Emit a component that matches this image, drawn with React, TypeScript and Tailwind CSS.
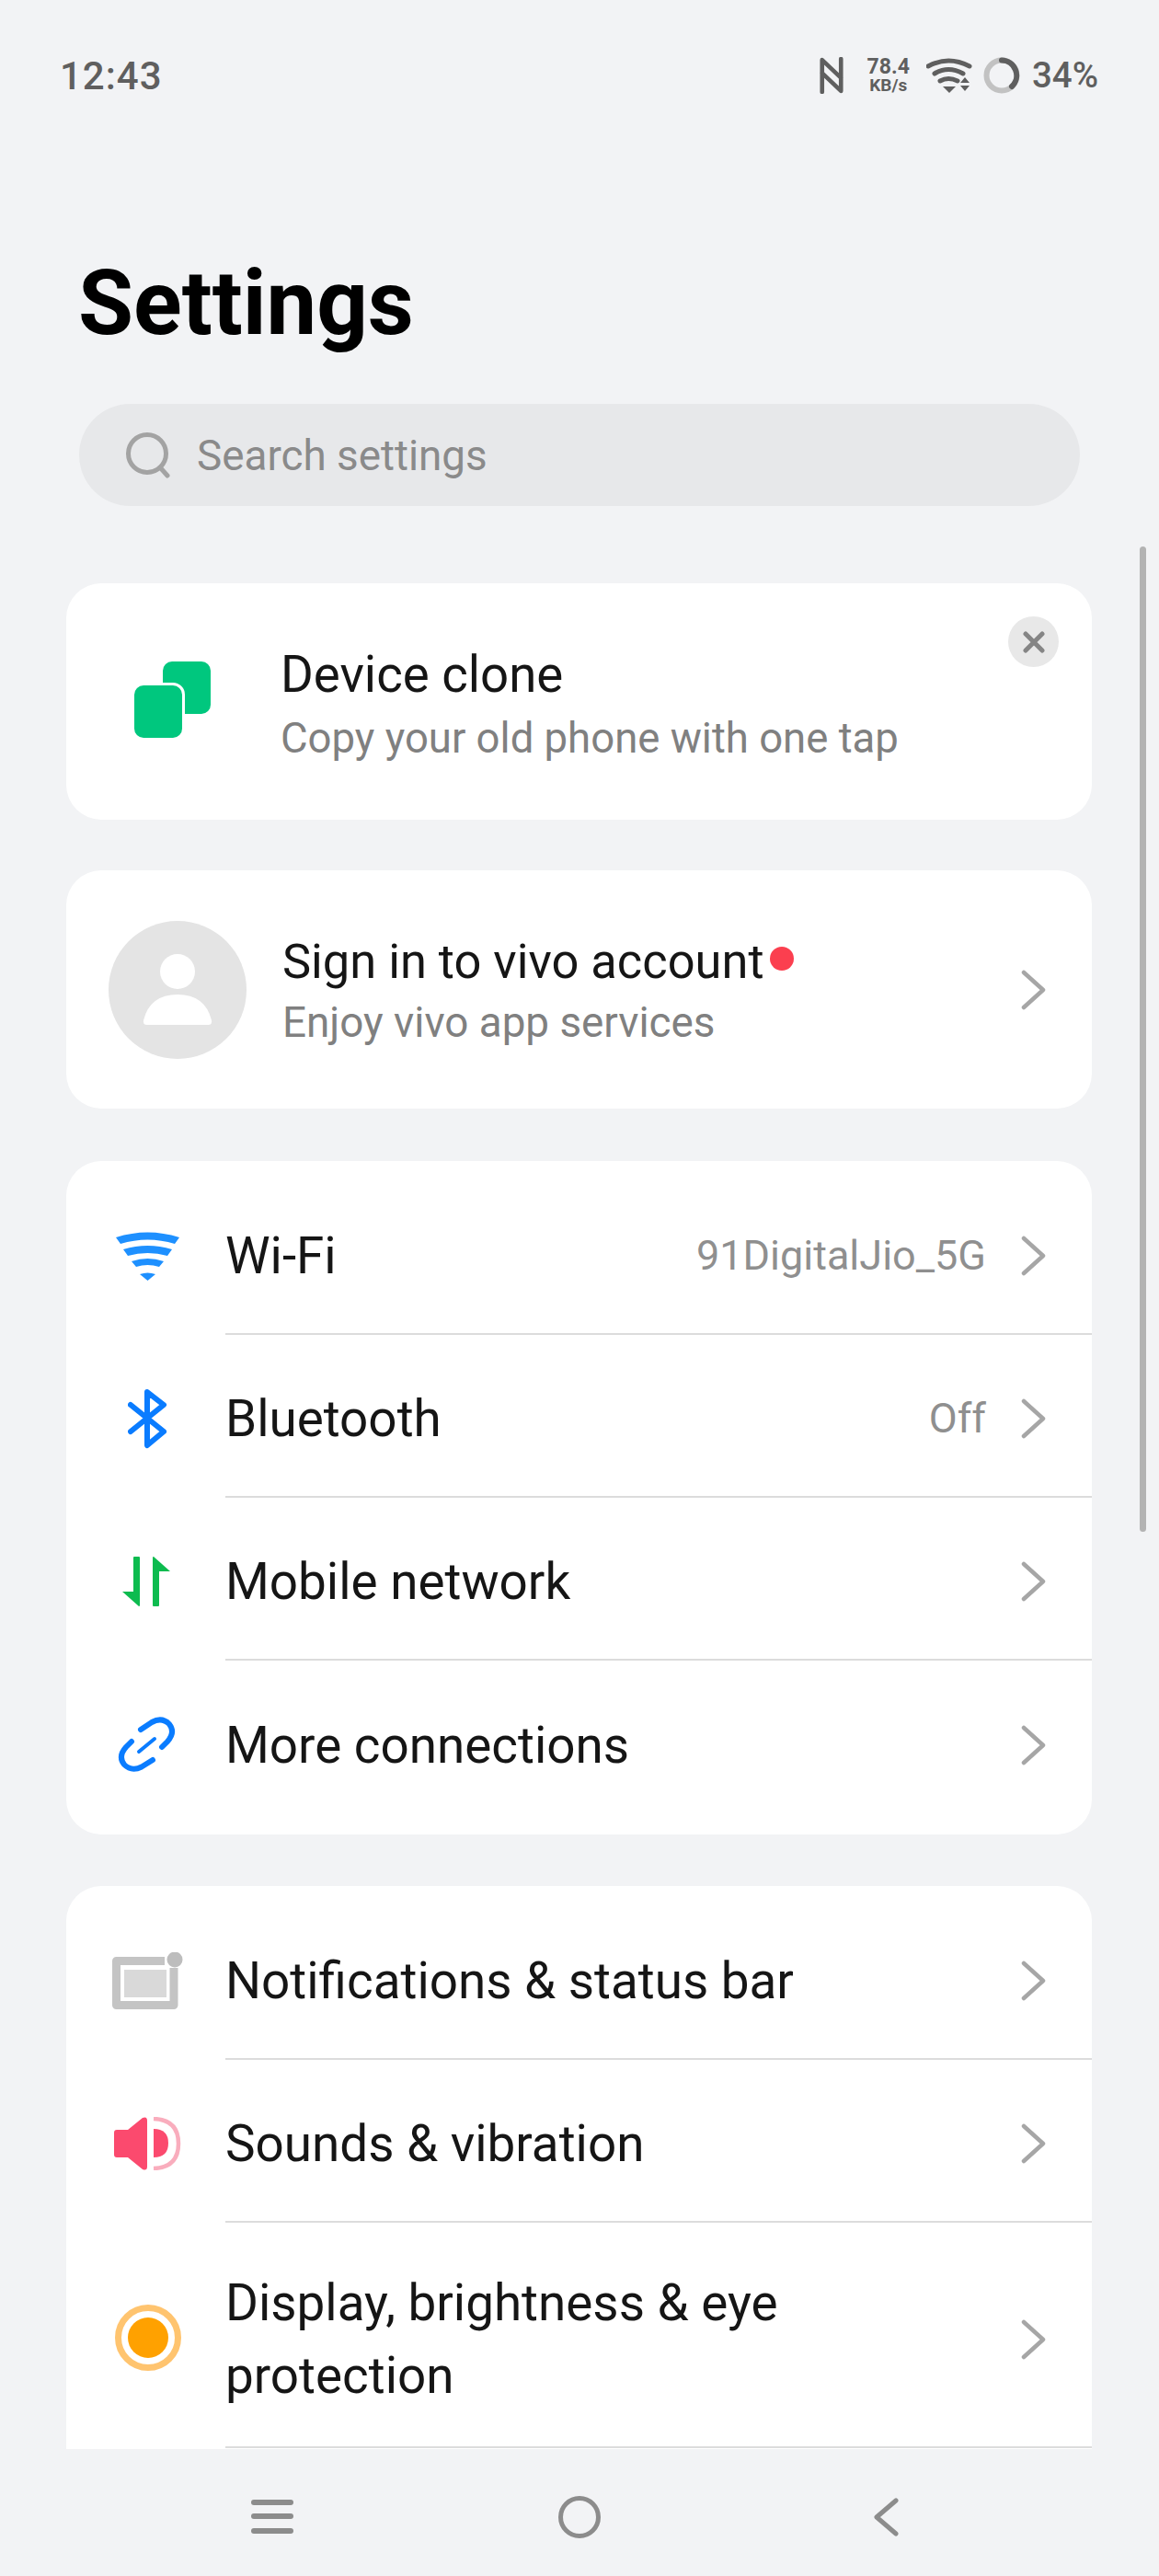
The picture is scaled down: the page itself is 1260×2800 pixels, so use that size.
const Chevron = () => (
  <svg width="27" height="44" viewBox="0 0 27 44" fill="none" className="shrink-0">
    <path d="M3 3 L24 22 L3 41" stroke="#a6a6a6" strokeWidth="4.5" strokeLinecap="round" strokeLinejoin="round" />
  </svg>
);

const WifiIcon = () => (
  <svg width="69" height="53" viewBox="0 0 69 53" fill="#1e90ff">
    <path d="M0 6 Q34.5 -5 69 6 L64 13 Q34.5 4 5 13Z" />
    <path d="M8 19 Q34.5 11 61 19 L56 26 Q34.5 20 13 26Z" />
    <path d="M17 32 Q34.5 26 52 32 L47 38 Q34.5 34 22 38Z" />
    <path d="M26 46 Q34.5 43 43 46 L34.5 53Z" />
  </svg>
);

const BluetoothIcon = () => (
  <svg width="43" height="66" viewBox="0 0 43 66" fill="none" stroke="#0a7cff" strokeWidth="6" strokeLinecap="round" strokeLinejoin="round">
    <path d="M3 18 L39 47 L21 62 V4 L39 18 L3 47" />
  </svg>
);

const MobileIcon = () => (
  <svg width="52" height="54" viewBox="0 0 52 54" fill="#0dbb4f" className="ml-[-3px]">
    <path d="M12 1 Q12 0 13 0 H18 Q19 0 19 1 V53 Q19 54 18 54 L0 38 H12Z" />
    <path d="M33 1 Q33 0 34 0 L52 16 H40 V53 Q40 54 39 54 H34 Q33 54 33 53Z" />
  </svg>
);

const LinkIcon = () => (
  <svg width="63" height="62" viewBox="0 0 63 62" fill="none" stroke="#0a7cff" strokeLinecap="round" className="ml-[-2px]">
    <path d="M25 15 L37 7 Q48 1 56 9 Q63 18 54 28 L48 34" strokeWidth="6" />
    <path d="M38 48 L26 55.5 Q15 61 7 53 Q0 44 9 34 L15 28" strokeWidth="6" />
    <path d="M23 39 L40 25" strokeWidth="4" />
  </svg>
);

const NotificationIcon = () => (
  <svg width="77" height="62" viewBox="0 0 77 62" fill="none">
    <path d="M57 9.5 H4.5 V57.5 H67 V17" stroke="#c4c4c4" strokeWidth="9" strokeLinejoin="round" />
    <rect x="13" y="19" width="46" height="30" fill="#d9d9d9" />
    <circle cx="68" cy="8" r="8.5" fill="#bdbdbd" />
  </svg>
);

const SoundIcon = () => (
  <svg width="73" height="58" viewBox="0 0 73 58">
    <path d="M3 14 H15 L31 1 Q36 -1 36 4 V54 Q36 59 31 57 L15 44 H3 Q0 44 0 41 V17 Q0 14 3 14Z" fill="#fb4a6e" />
    <path d="M43 13 Q59 13 59 28.5 Q59 44 43 44Z" fill="#fb4a6e" />
    <path d="M43 2 Q70 3 70 29 Q70 55 43 56" fill="none" stroke="#f9adbd" strokeWidth="4.5" />
  </svg>
);

const DisplayIcon = () => (
  <svg width="72" height="72" viewBox="0 0 72 72">
    <circle cx="36" cy="36" r="32.5" fill="none" stroke="#ffc46f" strokeWidth="7" />
    <circle cx="36" cy="36" r="22" fill="#ffa100" />
  </svg>
);

type RowProps = {
  icon: React.ReactNode;
  label: React.ReactNode;
  value?: string;
  height?: string;
  contentTop?: string;
  last?: boolean;
};

const Row = ({ icon, label, value, height = "h-[177px]", contentTop = "pt-[7px]", last }: RowProps) => (
  <div className={`flex ${height}`}>
    <div className="w-[173px] shrink-0 flex items-center justify-center pl-[4px] pt-[5px]">
      {icon}
    </div>
    <div className={`flex-1 flex items-center pr-[50px] ${contentTop} ${last ? "" : "border-b-2 border-[#dcdcdc]"}`}>
      <div className="flex-1 max-w-[760px] mr-auto text-[54.8px] leading-[79px] text-[#151515]">{label}</div>
      {value && <span className="text-[45px] text-[#8f8f8f] mr-[38px]">{value}</span>}
      <Chevron />
    </div>
  </div>
);

export default function App() {
  return (
    <div
      className="relative w-[1260px] h-[2800px] overflow-hidden bg-[#f2f3f5] flex flex-col"
      style={{ fontFamily: 'Roboto, "Noto Sans", sans-serif' }}
    >
      <div className="h-[2662px] overflow-hidden shrink-0">
        {/* Status bar */}
        <div className="flex items-center justify-between h-[164px] pl-[65px] pr-[66px] text-[#5f5f5f]">
          <span className="text-[42px] font-medium tracking-[1px]">12:43</span>
          <div className="flex items-center">
            <svg width="28" height="40" viewBox="0 0 26 39" fill="none" stroke="#5f5f5f" strokeWidth="4.5" strokeLinecap="round" strokeLinejoin="round">
              <path d="M3 37 V3 L23 22 M23 2 V36 L3 17" />
            </svg>
            <div className="flex flex-col items-center ml-[25px] font-bold leading-none">
              <span className="text-[23px] leading-[21px]">78.4</span>
              <span className="text-[19px] leading-[20px]">KB/s</span>
            </div>
            <svg width="50" height="38" viewBox="0 0 50 38" fill="none" stroke="#5f5f5f" className="ml-[18px]">
              <path d="M2 9 Q24 -3 47 9" strokeWidth="5" strokeLinecap="round" />
              <path d="M9 17 Q24 8 40 17" strokeWidth="5" strokeLinecap="round" />
              <path d="M15 25 Q24 20 34 25" strokeWidth="5" strokeLinecap="round" />
              <path d="M18 31 H32 L25 38Z" fill="#5f5f5f" stroke="none" />
              <path d="M37 27 L42 21 L47 27Z M37 30 H47 L42 36Z" fill="#5f5f5f" stroke="none" />
            </svg>
            <svg width="40" height="40" viewBox="0 0 40 40" fill="none" className="ml-[12px]">
              <circle cx="20" cy="20" r="16.5" stroke="#c2c2c2" strokeWidth="6" />
              <path d="M20 3.5 A16.5 16.5 0 0 1 31 32" stroke="#5f5f5f" strokeWidth="6" strokeLinecap="round" />
            </svg>
            <span className="text-[38.5px] font-medium ml-[13px]">34%</span>
          </div>
        </div>

        {/* Title */}
        <div className="pl-[85px] h-[275px] pt-[106px]">
          <h1 className="text-[97.5px] leading-[120px] font-bold text-black">Settings</h1>
        </div>

        {/* Search */}
        <div className="ml-[86px] w-[1088px] h-[111px] rounded-full bg-[#e7e8ea] flex items-center pl-[50px]">
          <svg width="50" height="50" viewBox="0 0 50 50" fill="none" stroke="#a3a3a3" strokeWidth="5" strokeLinecap="round">
            <circle cx="24" cy="23" r="20.5" />
            <path d="M38 38 L46 47" />
          </svg>
          <span className="ml-[28px] mt-[4px] text-[45.8px] text-[#8a8a8a]">Search settings</span>
        </div>

        {/* Cards */}
        <div className="mx-[72px] w-[1115px] flex flex-col mt-[84px]">
          <div className="relative bg-white rounded-[38px] h-[257px] flex items-center pl-[74px]">
            <svg width="83" height="84" viewBox="0 0 83 84" className="shrink-0 mt-[-4px]">
              <rect x="31" y="0" width="52" height="57" rx="10" fill="#00c77e" />
              <rect x="-3" y="23" width="58" height="64" rx="13" fill="#ffffff" />
              <rect x="0" y="26" width="52" height="57" rx="10" fill="#00c77e" />
            </svg>
            <div className="ml-[76px] mt-[11px]">
              <div className="text-[54.6px] leading-[70px] text-[#151515]">Device clone</div>
              <div className="text-[45.5px] leading-[70px] text-[#808080]">Copy your old phone with one tap</div>
            </div>
            <div className="absolute left-[1024px] top-[36px] w-[55px] h-[55px] rounded-full bg-[#e8e8e8] flex items-center justify-center">
              <svg width="24" height="24" viewBox="0 0 24 24" fill="none" stroke="#858585" strokeWidth="5" strokeLinecap="round">
                <path d="M3 3 L21 21 M21 3 L3 21" />
              </svg>
            </div>
          </div>

          <div className="mt-[55px] bg-white rounded-[38px] h-[259px] flex items-center pl-[46px] pr-[50px]">
            <svg width="150" height="150" viewBox="0 0 150 150" className="shrink-0">
              <circle cx="75" cy="75" r="75" fill="#e4e4e4" />
              <circle cx="75" cy="55" r="19" fill="#ffffff" />
              <path d="M42 113 Q37 113 38 108 Q45 80 75 80 Q105 80 112 108 Q113 113 108 113Z" fill="#ffffff" />
            </svg>
            <div className="ml-[39px] flex-1 mt-[2px]">
              <div className="flex items-center">
                <span className="text-[52.4px] leading-[70px] text-[#151515]">Sign in to vivo account</span>
                <span className="ml-[6px] mt-[-6px] w-[26px] h-[26px] rounded-full bg-[#fb3f4f]" />
              </div>
              <div className="text-[45.8px] leading-[64px] text-[#808080]">Enjoy vivo app services</div>
            </div>
            <Chevron />
          </div>

          <div className="mt-[57px] bg-white rounded-[38px] py-[12px]">
            <Row icon={<WifiIcon />} label="Wi-Fi" value="91DigitalJio_5G" />
            <Row icon={<BluetoothIcon />} label="Bluetooth" value="Off" />
            <Row icon={<MobileIcon />} label="Mobile network" />
            <Row icon={<LinkIcon />} label="More connections" last />
          </div>

          <div className="mt-[56px] bg-white rounded-t-[38px] pt-[12px] pb-[120px]">
            <Row icon={<NotificationIcon />} label="Notifications & status bar" />
            <Row icon={<SoundIcon />} label="Sounds & vibration" />
            <Row icon={<DisplayIcon />} label="Display, brightness & eye protection" height="h-[245px]" contentTop="pt-[10px]" />
          </div>
        </div>
      </div>

      {/* Navigation bar */}
      <div className="flex-1 relative flex items-center">
        <div className="flex w-full items-center pl-[273px] pt-[10px]">
          <svg width="46" height="38" viewBox="0 0 46 38" fill="#8c8c8c">
            <rect x="0" y="0" width="46" height="6" rx="3" />
            <rect x="0" y="15" width="46" height="6" rx="3" />
            <rect x="0" y="31" width="46" height="6" rx="3" />
          </svg>
          <svg width="46" height="46" viewBox="0 0 46 46" fill="none" stroke="#8c8c8c" strokeWidth="5" className="ml-[288px]">
            <circle cx="23" cy="23" r="20.5" />
          </svg>
          <svg width="28" height="42" viewBox="0 0 28 42" fill="none" stroke="#8c8c8c" strokeWidth="5" strokeLinecap="round" strokeLinejoin="round" className="ml-[296px]">
            <path d="M25 3 L4 21 L25 39" />
          </svg>
        </div>
      </div>

      {/* Overlay scrollbar */}
      <div className="absolute left-[1239px] top-[594px] w-[7px] h-[1071px] rounded-full bg-[#b3b3b3]" />
    </div>
  );
}
